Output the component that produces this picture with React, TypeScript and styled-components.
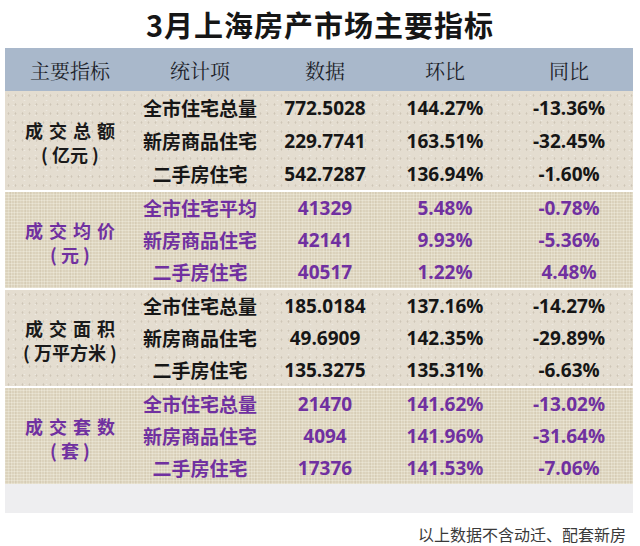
import React from "react";
import styled, { createGlobalStyle, css } from "styled-components";

const GlobalStyle = createGlobalStyle`
  html, body {
    margin: 0;
    padding: 0;
    background: #ffffff;
  }
  body {
    font-family: "Open Sans", "Noto Sans CJK SC", sans-serif;
  }
`;

const COLS = "130px 130px 120px 120px 128px";

const Page = styled.div`
  width: 640px;
  height: 546px;
  overflow: hidden;
  background: #ffffff;
`;

const Title = styled.h1`
  margin: 0;
  height: 48px;
  display: flex;
  align-items: center;
  justify-content: center;
  font-family: "Noto Sans CJK SC", sans-serif;
  font-size: 29px;
  font-weight: 700;
  color: #161616;
  letter-spacing: 1px;
`;

const Table = styled.div`
  width: 628px;
  margin-left: 5px;
`;

const HeaderRow = styled.div`
  display: grid;
  grid-template-columns: ${COLS};
  height: 43px;
  background: #a9b8cb;
`;

const HeaderCell = styled.div`
  display: flex;
  align-items: center;
  justify-content: center;
  font-family: "Noto Serif CJK SC", "Noto Sans CJK SC", serif;
  font-size: 20px;
  font-weight: 400;
  color: #1d1f2a;
  padding-top: 2px;
`;

const plain = css`
  background-color: #e4ddd0;
  background-image:
    radial-gradient(rgba(120, 105, 85, 0.2) 0.6px, transparent 1.2px),
    radial-gradient(rgba(255, 255, 255, 0.35) 0.6px, transparent 1.2px);
  background-size: 7px 9px, 11px 5px;
  background-position: 0 0, 3px 2px;
`;

const linen = css`
  background-color: #dbd2bc;
  background-image:
    repeating-linear-gradient(0deg, rgba(255, 255, 245, 0.28) 0 1px, transparent 1px 3px),
    repeating-linear-gradient(90deg, rgba(255, 255, 245, 0.22) 0 1px, transparent 1px 3px),
    repeating-linear-gradient(90deg, rgba(150, 130, 95, 0.08) 0 1px, transparent 1px 5px);
`;

const Section = styled.div<{ $linen?: boolean; $first?: boolean }>`
  display: grid;
  grid-template-columns: ${COLS};
  grid-auto-rows: ${({ $first }) => ($first ? "33px" : "32px")};
  border-top: ${({ $first }) => ($first ? "0" : "2px solid #ffffff")};
  ${({ $linen }) => ($linen ? linen : plain)}
`;

const Label = styled.div<{ $purple?: boolean }>`
  grid-row: 1 / span 3;
  display: flex;
  flex-direction: column;
  align-items: center;
  justify-content: center;
  font-family: "Noto Sans CJK SC", sans-serif;
  font-size: 18px;
  font-weight: 700;
  line-height: 24px;
  color: ${({ $purple }) => ($purple ? "#7030a0" : "#1a1a1a")};
  padding-top: 3px;
`;

const LabelMain = styled.span`
  letter-spacing: 6px;
  margin-right: -6px;
`;

const Cell = styled.div<{ $purple?: boolean }>`
  display: flex;
  align-items: center;
  justify-content: center;
  font-family: "Open Sans", "Noto Sans CJK SC", sans-serif;
  font-size: 19px;
  font-weight: 700;
  color: ${({ $purple }) => ($purple ? "#7030a0" : "#161616")};
`;

const GreyStrip = styled.div`
  height: 29px;
  background: #eeeef0;
`;

const Footer = styled.div`
  display: flex;
  justify-content: flex-end;
  padding: 9px 14px 0 0;
  font-family: "Noto Sans CJK SC", sans-serif;
  font-size: 16px;
  font-weight: 400;
  color: #3a3a3a;
`;

interface Group {
  label: string;
  unit: string;
  purple: boolean;
  rows: [string, string, string, string][];
}

const groups: Group[] = [
  {
    label: "成交总额",
    unit: "( 亿元 )",
    purple: false,
    rows: [
      ["全市住宅总量", "772.5028", "144.27%", "-13.36%"],
      ["新房商品住宅", "229.7741", "163.51%", "-32.45%"],
      ["二手房住宅", "542.7287", "136.94%", "-1.60%"],
    ],
  },
  {
    label: "成交均价",
    unit: "( 元 )",
    purple: true,
    rows: [
      ["全市住宅平均", "41329", "5.48%", "-0.78%"],
      ["新房商品住宅", "42141", "9.93%", "-5.36%"],
      ["二手房住宅", "40517", "1.22%", "4.48%"],
    ],
  },
  {
    label: "成交面积",
    unit: "( 万平方米 )",
    purple: false,
    rows: [
      ["全市住宅总量", "185.0184", "137.16%", "-14.27%"],
      ["新房商品住宅", "49.6909", "142.35%", "-29.89%"],
      ["二手房住宅", "135.3275", "135.31%", "-6.63%"],
    ],
  },
  {
    label: "成交套数",
    unit: "( 套 )",
    purple: true,
    rows: [
      ["全市住宅总量", "21470", "141.62%", "-13.02%"],
      ["新房商品住宅", "4094", "141.96%", "-31.64%"],
      ["二手房住宅", "17376", "141.53%", "-7.06%"],
    ],
  },
];

const headers = ["主要指标", "统计项", "数据", "环比", "同比"];

export default function App() {
  return (
    <Page>
      <GlobalStyle />
      <Title>3月上海房产市场主要指标</Title>
      <Table>
        <HeaderRow>
          {headers.map((h) => (
            <HeaderCell key={h}>{h}</HeaderCell>
          ))}
        </HeaderRow>
        {groups.map((g, i) => (
          <Section key={g.label} $linen={g.purple} $first={i === 0}>
            <Label $purple={g.purple}>
              <LabelMain>{g.label}</LabelMain>
              <span>{g.unit}</span>
            </Label>
            {g.rows.map((r) =>
              r.map((v, j) => (
                <Cell key={`${r[0]}-${j}`} $purple={g.purple}>
                  {v}
                </Cell>
              ))
            )}
          </Section>
        ))}
        <GreyStrip />
      </Table>
      <Footer>以上数据不含动迁、配套新房</Footer>
    </Page>
  );
}
